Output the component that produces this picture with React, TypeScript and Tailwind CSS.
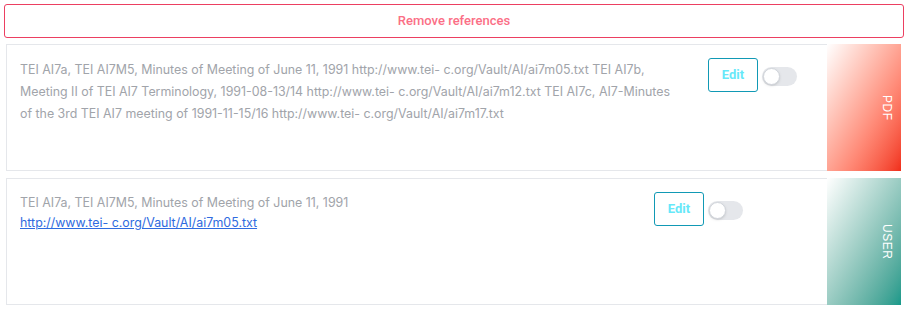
type RefItem = {
  id: number;
  text: string;
  link?: string;
  source: "PDF" | "USER";
  textWidth: string;
};

const refs: RefItem[] = [
  {
    id: 1,
    text: "TEI AI7a, TEI AI7M5, Minutes of Meeting of June 11, 1991 http://www.tei- c.org/Vault/AI/ai7m05.txt TEI AI7b, Meeting II of TEI AI7 Terminology, 1991-08-13/14 http://www.tei- c.org/Vault/AI/ai7m12.txt TEI AI7c, AI7-Minutes of the 3rd TEI AI7 meeting of 1991-11-15/16 http://www.tei- c.org/Vault/AI/ai7m17.txt",
    source: "PDF",
    textWidth: "w-[660px] mr-[28px]",
  },
  {
    id: 2,
    text: "TEI AI7a, TEI AI7M5, Minutes of Meeting of June 11, 1991",
    link: "http://www.tei- c.org/Vault/AI/ai7m05.txt",
    source: "USER",
    textWidth: "w-[622px] mr-[12px]",
  },
];

const Toggle = () => (
  <button className="mt-[9px] ml-[4px] w-[35px] h-[19px] rounded-full bg-[#e5e7eb] flex items-center px-[1px]">
    <span className="w-[17px] h-[17px] rounded-full bg-white border border-[#d1d5db] shadow-sm" />
  </button>
);

const RefRow = ({ item }: { item: RefItem }) => {
  const strip =
    item.source === "PDF"
      ? "bg-linear-to-br from-white to-[#f02c18]"
      : "bg-linear-to-br from-white to-[#13998a]";
  return (
    <div className="flex h-[127px]">
      <div className="flex-1 flex items-start border border-r-0 border-[#e5e7eb] pt-[13px] pl-[13px]">
        <div className={`${item.textWidth} pt-[1px] text-[12.4px] leading-[22px] text-[#a1a4aa] font-['Inter',sans-serif]`}>
          {item.link ? (
            <>
              <p className="leading-[20px]">{item.text}</p>
              <a href="#" className="block leading-[20px] text-[#2f6be0] underline">
                {item.link}
              </a>
            </>
          ) : (
            <p>{item.text}</p>
          )}
        </div>
        <button className="w-[50px] h-[34px] border border-[#1199b5] rounded-[3px] text-[13px] font-bold text-[#67e8f9] font-['Roboto',sans-serif]">
          Edit
        </button>
        <Toggle />
      </div>
      <div className={`w-[74px] flex items-center justify-end pr-[5px] ${strip}`}>
        <span className="[writing-mode:vertical-rl] text-white text-[12px] tracking-[0.5px]">
          {item.source}
        </span>
      </div>
    </div>
  );
};

export default function App() {
  return (
    <div className="bg-white w-[908px] h-[309px] p-1 font-['Liberation_Sans',Arial,sans-serif]">
      <button className="w-full h-[34px] border border-[#ec3f61] rounded-[3px] text-[13px] font-medium text-[#fb6f86] font-['Roboto',sans-serif]">
        Remove references
      </button>
      <div className="mt-[6px] pl-[2px] pr-[3px] flex flex-col gap-[7px]">
        {refs.map((r) => (
          <RefRow key={r.id} item={r} />
        ))}
      </div>
    </div>
  );
}
